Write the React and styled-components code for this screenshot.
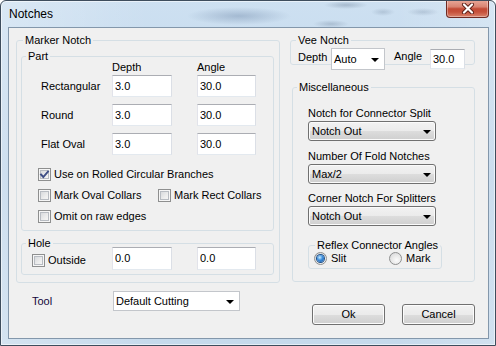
import React from 'react';
import styled, { createGlobalStyle } from 'styled-components';

const GlobalStyle = createGlobalStyle`
  html, body { margin: 0; padding: 0; background: #ffffff; }
  body { font-family: "Liberation Sans", Arial, sans-serif; font-size: 11px; color: #000; }
  * { box-sizing: border-box; }
`;

const Window = styled.div`
  width: 496px;
  height: 346px;
  border: 1px solid #3e4d5d;
  border-radius: 6px 6px 0 0;
  display: flex;
  flex-direction: column;
  overflow: hidden;
  background:
    linear-gradient(90deg, rgba(255,255,255,0.25), rgba(255,255,255,0) 30%, rgba(255,255,255,0) 80%, rgba(255,255,255,0.2)),
    linear-gradient(#cde0f1, #bfd5ea 50%, #c6daec);
  box-shadow: inset 0 0 0 1px rgba(255,255,255,0.55);
`;

const TitleBar = styled.div`
  height: 26px;
  flex: 0 0 26px;
  display: flex;
  align-items: flex-start;
  justify-content: space-between;
  padding-left: 8px;
  background:
    radial-gradient(ellipse 52px 9px at 238px 15px, rgba(115,140,172,0.45), transparent),
    radial-gradient(ellipse 22px 4px at 345px 4px, rgba(95,115,140,0.35), transparent),
    radial-gradient(ellipse 12px 4px at 382px 11px, rgba(95,115,140,0.25), transparent),
    radial-gradient(ellipse 16px 4px at 422px 11px, rgba(95,115,140,0.25), transparent),
    radial-gradient(ellipse 18px 4px at 330px 23px, rgba(95,115,140,0.3), transparent);
`;

const Title = styled.span`
  font-size: 12px;
  line-height: 26px;
  color: #000;
`;

const CloseButton = styled.div`
  width: 43px;
  height: 18px;
  margin: -1px 6px 0 0;
  border: 1px solid #6f2a22;
  border-top: none;
  border-radius: 0 0 4px 4px;
  background: linear-gradient(#e9a99a 0%, #d98472 40%, #c24a35 52%, #c6513b 70%, #d9836c 100%);
  box-shadow: inset 0 0 0 1px rgba(255,255,255,0.35);
  display: flex;
  align-items: center;
  justify-content: center;
`;

const Client = styled.div`
  flex: 1;
  margin: 0 6px 6px 7px;
  border: 1px solid #8397ab;
  background: #f0f0f0;
  display: flex;
  align-items: flex-start;
  gap: 10px;
  padding: 6px 0 0 7px;
`;

const Column = styled.div`
  width: ${p => p.$w}px;
  display: flex;
  flex-direction: column;
`;

const Group = styled.fieldset`
  margin: ${p => p.$mt || 0}px 0 0 ${p => p.$ml || 0}px;
  padding: 0;
  min-width: 0;
  width: ${p => (p.$w ? `${p.$w}px` : 'auto')};
  border: 1px solid #d5dfe5;
  border-radius: 3px;
`;

const Legend = styled.legend`
  margin-left: ${p => p.$indent}px;
  padding: 0 2px;
  line-height: 13px;
  font-size: 11px;
`;

const MarkerBody = styled.div`
  padding: 3px 5px 7px 4px;
`;

const PartBody = styled.div`
  padding: 0 0 7px 16px;
`;

const ColumnHeads = styled.div`
  display: grid;
  grid-template-columns: 49px 60px 59px;
  column-gap: 25px;
  line-height: 10px;
  margin: -1px 0 3px;
`;

const FieldGrid = styled.div`
  display: grid;
  grid-template-columns: 49px 60px 59px;
  column-gap: 25px;
  row-gap: 7px;
  align-items: center;
`;

const RowLabel = styled.span`
  padding-left: 3px;
  line-height: 13px;
  white-space: nowrap;
`;

const TextInput = styled.input`
  width: ${p => p.$w}px;
  height: ${p => p.$h}px;
  margin: 0;
  padding: 0 2px 1px 2px;
  border: 1px solid;
  border-color: #abadb3 #dbdfe6 #e3e9ef #e2e3ea;
  background: #fff;
  font-family: "Liberation Sans", Arial, sans-serif;
  font-size: 11px;
  color: #000;
  outline: none;
`;

const CheckList = styled.div`
  margin-top: 13px;
  display: flex;
  flex-direction: column;
  gap: 8px;
`;

const CheckPair = styled.div`
  display: grid;
  grid-template-columns: 120px auto;
`;

const CheckItem = styled.label`
  display: flex;
  align-items: center;
  gap: 3px;
  height: 13px;
  line-height: 13px;
  white-space: nowrap;
`;

const Box = styled.span`
  position: relative;
  width: 13px;
  height: 13px;
  flex: 0 0 13px;
  border: 1px solid #8e8f8f;
  background: linear-gradient(135deg, #cfd2d6 0%, #eeeeee 60%, #fafafa 100%);
  box-shadow: inset 0 0 0 1px #f6f6f6, inset 0 0 0 2px #b8bcc2;
  display: flex;
  align-items: center;
  justify-content: center;
`;

const RadioDot = styled.span`
  width: 13px;
  height: 13px;
  flex: 0 0 13px;
  border-radius: 50%;
  border: 1px solid #8e8f8f;
  background: radial-gradient(circle at 60% 65%, #fbfbfb 0%, #e6e6e6 55%, #cfd1d4 100%);
  display: flex;
  align-items: center;
  justify-content: center;
  &::after {
    content: '';
    width: 7px;
    height: 7px;
    border-radius: 50%;
    display: ${p => (p.$on ? 'block' : 'none')};
    background: radial-gradient(circle at 40% 35%, #c9ecff 0%, #3c8ddc 45%, #13529e 100%);
    box-shadow: 0 0 0 1px #1d4f88;
  }
`;

const HoleBody = styled.div`
  margin-top: -3px;
  padding: 0 0 4px 10px;
  display: flex;
  align-items: flex-end;
  & > input + input { margin-left: 25px; }
`;

const HoleCheck = styled(CheckItem)`
  width: 80px;
  margin-bottom: 3px;
`;

const ToolRow = styled.div`
  margin-top: 8px;
  display: flex;
  align-items: center;
`;

const ToolLabel = styled.span`
  width: 97px;
  padding-left: 16px;
  line-height: 13px;
  color: #14083c;
`;

const Combo = styled.div`
  width: ${p => p.$w}px;
  height: ${p => p.$h}px;
  display: flex;
  align-items: center;
  justify-content: space-between;
  border: 1px solid ${p => (p.$variant === 'button' ? '#707070' : '#c3c6cb')};
  border-radius: ${p => (p.$variant === 'button' ? '3px' : '0')};
  padding: ${p => (p.$variant === 'button' ? '0 4px 0 3px' : '0 5px 0 2px')};
  background: ${p =>
    p.$variant === 'button'
      ? 'linear-gradient(#f2f2f2 0%, #ebebeb 50%, #dddddd 51%, #cfcfcf 100%)'
      : '#ffffff'};
  box-shadow: ${p => (p.$variant === 'button' ? 'inset 0 0 0 1px #fbfbfb' : 'none')};
  line-height: 13px;
  white-space: nowrap;
`;

const Arrow = styled.span`
  width: 0;
  height: 0;
  border-left: 4px solid transparent;
  border-right: 4px solid transparent;
  border-top: 4px solid #000;
  margin-top: 1px;
`;

const VeeBody = styled.div`
  margin: 1px 0 -6px;
  padding-left: 7px;
  display: flex;
  align-items: flex-start;
`;

const InlineLabel = styled.span`
  line-height: 13px;
  margin-top: ${p => p.$mt || 0}px;
  margin-left: ${p => p.$ml || 0}px;
  width: ${p => p.$w}px;
`;

const VeeInput = styled(TextInput)`
  margin-top: 1px;
`;

const MiscBody = styled.div`
  padding: 13px 0 12px 15px;
  display: flex;
  flex-direction: column;
`;

const MiscLabel = styled.span`
  line-height: 13px;
  margin: ${p => p.$mt || 0}px 0 1px;
`;

const ReflexBody = styled.div`
  padding: 0 0 3px 5px;
  display: flex;
`;

const RadioItem = styled.label`
  display: flex;
  align-items: center;
  gap: 4px;
  height: 13px;
  line-height: 13px;
  width: ${p => p.$w}px;
`;

const ButtonRow = styled.div`
  margin-top: 22px;
  display: flex;
  justify-content: flex-end;
  gap: 17px;
`;

const PushButton = styled.div`
  width: 73px;
  height: 21px;
  border: 1px solid #707070;
  border-radius: 3px;
  background: linear-gradient(#f2f2f2 0%, #ebebeb 50%, #dddddd 51%, #cfcfcf 100%);
  box-shadow: inset 0 0 0 1px #fcfcfc;
  display: flex;
  align-items: center;
  justify-content: center;
  line-height: 13px;
`;

const CheckMark = () => (
  <svg width="11" height="11" viewBox="0 0 11 11">
    <path d="M2 5.5 L4.3 8 L9 2.5" fill="none" stroke="#3f4f86" strokeWidth="1.9" strokeLinecap="square" />
  </svg>
);

const CheckBox = ({ checked }) => <Box>{checked && <CheckMark />}</Box>;

const CloseGlyph = () => (
  <svg width="16" height="11" viewBox="0 0 16 11">
    <path d="M4 1.5 L12 9.5 M12 1.5 L4 9.5" stroke="#5b1f17" strokeWidth="4" strokeLinecap="round" />
    <path d="M4 1.5 L12 9.5 M12 1.5 L4 9.5" stroke="#ffffff" strokeWidth="2.2" strokeLinecap="round" />
  </svg>
);

const rows = [
  ['Rectangular', '3.0', '30.0'],
  ['Round', '3.0', '30.0'],
  ['Flat Oval', '3.0', '30.0'],
];

export default function App() {
  return (
    <>
      <GlobalStyle />
      <Window>
        <TitleBar>
          <Title>Notches</Title>
          <CloseButton><CloseGlyph /></CloseButton>
        </TitleBar>
        <Client>
          <Column $w={264}>
            <Group>
              <Legend $indent={6}>Marker Notch</Legend>
              <MarkerBody>
                <Group>
                  <Legend $indent={4}>Part</Legend>
                  <PartBody>
                    <ColumnHeads>
                      <span />
                      <span>Depth</span>
                      <span>Angle</span>
                    </ColumnHeads>
                    <FieldGrid>
                      {rows.map(([name, d, a]) => (
                        <React.Fragment key={name}>
                          <RowLabel>{name}</RowLabel>
                          <TextInput $w={60} $h={22} value={d} readOnly />
                          <TextInput $w={59} $h={22} value={a} readOnly />
                        </React.Fragment>
                      ))}
                    </FieldGrid>
                    <CheckList>
                      <CheckItem><CheckBox checked />Use on Rolled Circular Branches</CheckItem>
                      <CheckPair>
                        <CheckItem><CheckBox />Mark Oval Collars</CheckItem>
                        <CheckItem><CheckBox />Mark Rect Collars</CheckItem>
                      </CheckPair>
                      <CheckItem><CheckBox />Omit on raw edges</CheckItem>
                    </CheckList>
                  </PartBody>
                </Group>
                <Group $mt={6}>
                  <Legend $indent={4}>Hole</Legend>
                  <HoleBody>
                    <HoleCheck><CheckBox />Outside</HoleCheck>
                    <TextInput $w={60} $h={23} value="0.0" readOnly />
                    <TextInput $w={59} $h={23} value="0.0" readOnly />
                  </HoleBody>
                </Group>
              </MarkerBody>
            </Group>
            <ToolRow>
              <ToolLabel>Tool</ToolLabel>
              <Combo $w={127} $h={20}>
                <span>Default Cutting</span>
                <Arrow />
              </Combo>
            </ToolRow>
          </Column>
          <Column $w={185}>
            <Group>
              <Legend $indent={5}>Vee Notch</Legend>
              <VeeBody>
                <InlineLabel $w={33} $mt={3}>Depth</InlineLabel>
                <Combo $w={54} $h={22}>
                  <span>Auto</span>
                  <Arrow />
                </Combo>
                <InlineLabel $w={36} $mt={2} $ml={9}>Angle</InlineLabel>
                <VeeInput $w={35} $h={20} value="30.0" readOnly />
              </VeeBody>
            </Group>
            <Group $mt={16} $ml={2}>
              <Legend $indent={4}>Miscellaneous</Legend>
              <MiscBody>
                <MiscLabel>Notch for Connector Split</MiscLabel>
                <Combo $variant="button" $w={128} $h={20}>
                  <span>Notch Out</span>
                  <Arrow />
                </Combo>
                <MiscLabel $mt={9}>Number Of Fold Notches</MiscLabel>
                <Combo $variant="button" $w={128} $h={20}>
                  <span>Max/2</span>
                  <Arrow />
                </Combo>
                <MiscLabel $mt={8}>Corner Notch For Splitters</MiscLabel>
                <Combo $variant="button" $w={128} $h={20}>
                  <span>Notch Out</span>
                  <Arrow />
                </Combo>
                <Group $mt={13} $w={134}>
                  <Legend $indent={6}>Reflex Connector Angles</Legend>
                  <ReflexBody>
                    <RadioItem $w={75}><RadioDot $on />Slit</RadioItem>
                    <RadioItem $w={50}><RadioDot />Mark</RadioItem>
                  </ReflexBody>
                </Group>
              </MiscBody>
            </Group>
            <ButtonRow>
              <PushButton>Ok</PushButton>
              <PushButton>Cancel</PushButton>
            </ButtonRow>
          </Column>
        </Client>
      </Window>
    </>
  );
}
